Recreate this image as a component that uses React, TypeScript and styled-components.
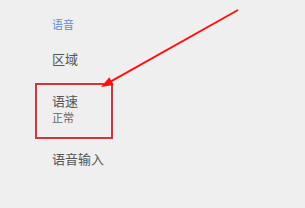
import React from 'react';
import styled, { createGlobalStyle } from 'styled-components';

const GlobalStyle = createGlobalStyle`
  html, body {
    margin: 0;
    padding: 0;
    background: #efefef;
  }
  body {
    font-family: "Noto Sans CJK SC", "Noto Sans", sans-serif;
  }
`;

const Page = styled.div`
  position: relative;
  width: 305px;
  height: 208px;
  overflow: hidden;
  background: #efefef;
  padding-left: 35px;
  box-sizing: border-box;
`;

const SectionTitle = styled.div`
  padding: 17px 0 0 17px;
  height: 14px;
  line-height: 14px;
  font-size: 11px;
  color: #5b8ed8;
  margin-bottom: 10px;
  box-sizing: content-box;
`;

const List = styled.div`
  display: flex;
  flex-direction: column;
  gap: 2px;
`;

const Item = styled.div<{ $highlighted?: boolean }>`
  width: 78px;
  box-sizing: border-box;
  padding: 8px 14px 12px 15px;
  border: 2px solid ${(p) => (p.$highlighted ? '#d8323a' : 'transparent')};
`;

const ItemTitle = styled.div`
  font-size: 13px;
  line-height: 16px;
  color: #555;
  white-space: nowrap;
`;

const ItemSub = styled.div`
  font-size: 11px;
  line-height: 16px;
  color: #666;
  white-space: nowrap;
`;

// annotation arrow drawn over the list
const Arrow = styled.svg`
  position: absolute;
  left: 0;
  top: 0;
  pointer-events: none;
`;

const items = [
  { title: '区域' },
  { title: '语速', sub: '正常', highlighted: true },
  { title: '语音输入' },
];

const App: React.FC = () => {
  return (
    <>
      <GlobalStyle />
      <Page>
        <SectionTitle>语音</SectionTitle>
        <List>
          {items.map((it) => (
            <Item key={it.title} $highlighted={it.highlighted}>
              <ItemTitle>{it.title}</ItemTitle>
              {it.sub && <ItemSub>{it.sub}</ItemSub>}
            </Item>
          ))}
        </List>
        <Arrow width="305" height="208" viewBox="0 0 305 208">
          <line x1="238" y1="10" x2="111" y2="81.4" stroke="#ff1010" strokeWidth="2" />
          <polygon points="101,87 113.7,85 109.3,77.2" fill="#ff1010" />
        </Arrow>
      </Page>
    </>
  );
};

export default App;
